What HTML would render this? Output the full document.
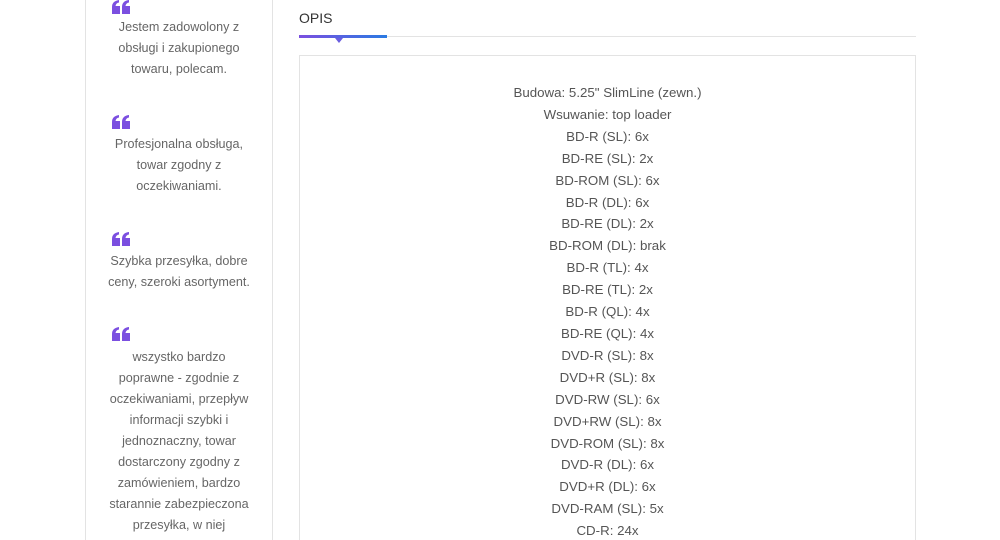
<!DOCTYPE html>
<html><head><style>
html,body{margin:0;width:1000px;height:540px;overflow:hidden}
body{background:#fff;font-family:"Liberation Sans",sans-serif;color:#555;position:relative}
.left{position:absolute;left:85px;top:-1px;width:186px;height:560px;border:1px solid #e3e3e3;border-top:none}
.q{position:absolute;left:26px;width:18px;height:14px}
.t{position:absolute;left:0;width:186px;text-align:center;font-size:12.6px;line-height:21px;color:#666}
.tab{position:absolute;left:299px;top:10px;font-size:14px;color:#333}
.line{position:absolute;left:299px;top:36px;width:617px;height:1px;background:#e3e3e3}
.ul{position:absolute;left:299px;top:35px;width:88px;height:3px;background:linear-gradient(90deg,#7b4fe0,#2a7ae2)}
.tri{position:absolute;left:335px;top:38px;width:0;height:0;border-left:4px solid transparent;border-right:4px solid transparent;border-top:5px solid #6a5ee0}
.box{position:absolute;left:299px;top:55px;width:615px;height:500px;border:1px solid #e3e3e3}
.c{position:absolute;left:0;top:26px;width:615px;text-align:center;font-size:13.3px;line-height:21.9px;color:#555}
</style></head><body>
<div class="left">
<svg class="q" style="top:1px" viewBox="0 0 18 14"><path d="M0 7Q0 1 7 0V2.5Q4 3 3.5 6H8V14H0Z M10 7Q10 1 17 0V2.5Q14 3 13.5 6H18V14H10Z" fill="#7b4fe0"/></svg>
<div class="t" style="top:18px">Jestem zadowolony z<br>obsługi i zakupionego<br>towaru, polecam.</div>
<svg class="q" style="top:116px" viewBox="0 0 18 14"><path d="M0 7Q0 1 7 0V2.5Q4 3 3.5 6H8V14H0Z M10 7Q10 1 17 0V2.5Q14 3 13.5 6H18V14H10Z" fill="#7b4fe0"/></svg>
<div class="t" style="top:135px">Profesjonalna obsługa,<br>towar zgodny z<br>oczekiwaniami.</div>
<svg class="q" style="top:233px" viewBox="0 0 18 14"><path d="M0 7Q0 1 7 0V2.5Q4 3 3.5 6H8V14H0Z M10 7Q10 1 17 0V2.5Q14 3 13.5 6H18V14H10Z" fill="#7b4fe0"/></svg>
<div class="t" style="top:252px">Szybka przesyłka, dobre<br>ceny, szeroki asortyment.</div>
<svg class="q" style="top:328px" viewBox="0 0 18 14"><path d="M0 7Q0 1 7 0V2.5Q4 3 3.5 6H8V14H0Z M10 7Q10 1 17 0V2.5Q14 3 13.5 6H18V14H10Z" fill="#7b4fe0"/></svg>
<div class="t" style="top:348px">wszystko bardzo<br>poprawne - zgodnie z<br>oczekiwaniami, przepływ<br>informacji szybki i<br>jednoznaczny, towar<br>dostarczony zgodny z<br>zamówieniem, bardzo<br>starannie zabezpieczona<br>przesyłka, w niej</div>
</div>
<div class="tab">OPIS</div>
<div class="line"></div><div class="ul"></div><div class="tri"></div>
<div class="box"><div class="c">Budowa: 5.25" SlimLine (zewn.)<br>Wsuwanie: top loader<br>BD-R (SL): 6x<br>BD-RE (SL): 2x<br>BD-ROM (SL): 6x<br>BD-R (DL): 6x<br>BD-RE (DL): 2x<br>BD-ROM (DL): brak<br>BD-R (TL): 4x<br>BD-RE (TL): 2x<br>BD-R (QL): 4x<br>BD-RE (QL): 4x<br>DVD-R (SL): 8x<br>DVD+R (SL): 8x<br>DVD-RW (SL): 6x<br>DVD+RW (SL): 8x<br>DVD-ROM (SL): 8x<br>DVD-R (DL): 6x<br>DVD+R (DL): 6x<br>DVD-RAM (SL): 5x<br>CD-R: 24x</div></div>
</body></html>
